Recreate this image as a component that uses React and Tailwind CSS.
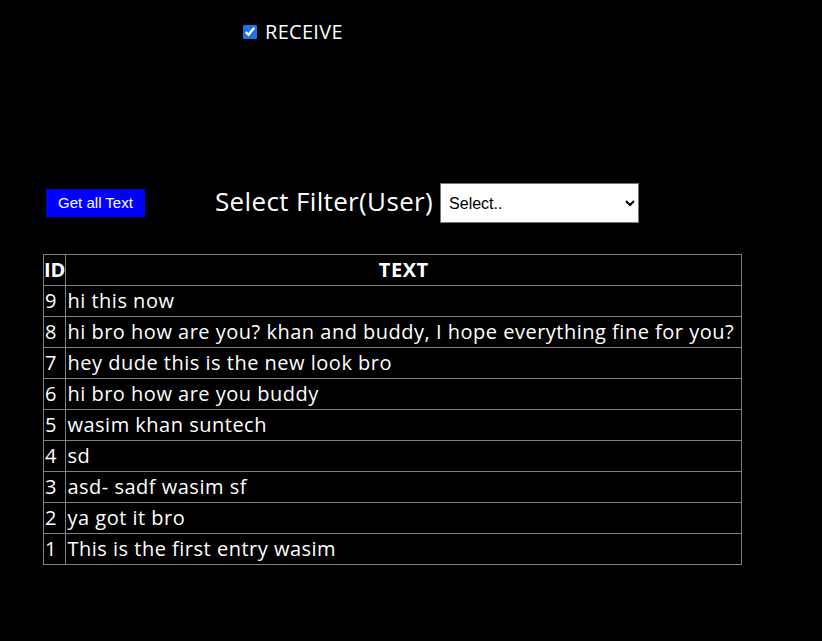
const rows = [
  [9, 'hi this now'],
  [8, 'hi bro how are you? khan and buddy, I hope everything fine for you?'],
  [7, 'hey dude this is the new look bro'],
  [6, 'hi bro how are you buddy'],
  [5, 'wasim khan suntech'],
  [4, 'sd'],
  [3, 'asd- sadf wasim sf'],
  [2, 'ya got it bro'],
  [1, 'This is the first entry wasim'],
];

export default function App() {
  return (
    <div className="min-h-[641px] bg-black text-white font-['Open_Sans',sans-serif]">
      <div className="flex items-center pt-[21px] pl-[243px] h-[43px]">
        <input type="checkbox" defaultChecked className="w-[14px] h-[14px] m-0 accent-[#1a73e8]" />
        <span className="ml-2 text-[20px] tracking-[0.3px] leading-none">RECEIVE</span>
      </div>

      <div className="flex items-center mt-[140px] h-[40px]">
        <button className="ml-[46px] w-[99px] h-[28px] bg-[#0000ff] text-white text-[15px] font-['Liberation_Sans',sans-serif]">
          Get all Text
        </button>
        <span className="ml-[70px] text-[26px] tracking-[0.35px] leading-none -mt-[5px]">Select Filter(User)</span>
        <select className="ml-[7px] w-[199px] h-[40px] bg-white text-black text-[16px] font-['Liberation_Sans',sans-serif] border border-[#767676] pl-1">
          <option>Select..</option>
        </select>
      </div>

      <table className="ml-[43px] mt-[31px] w-[699px] border-collapse text-[20px] tracking-[0.5px]">
        <thead>
          <tr className="h-[31px]">
            <th className="w-[22px] border border-[#808080] text-left font-bold px-0 leading-none tracking-normal">ID</th>
            <th className="border border-[#808080] font-bold leading-none">TEXT</th>
          </tr>
        </thead>
        <tbody>
          {rows.map(([id, text]) => (
            <tr key={id} className="h-[31px]">
              <td className="border border-[#808080] px-[1px] leading-none">{id}</td>
              <td className="border border-[#808080] px-[1px] leading-none whitespace-nowrap">{text}</td>
            </tr>
          ))}
        </tbody>
      </table>
    </div>
  );
}
